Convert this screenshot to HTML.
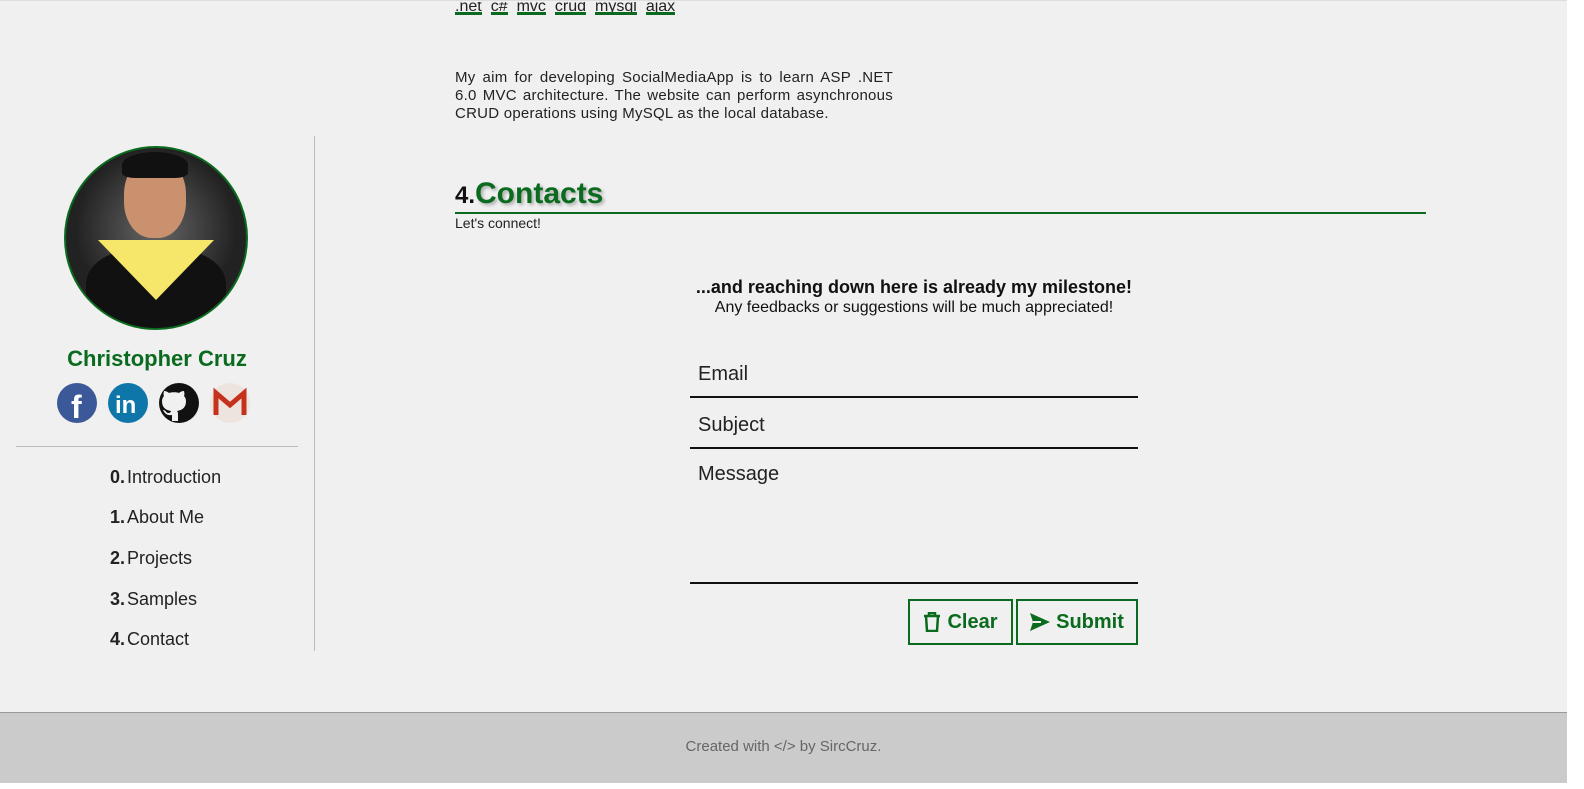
<!DOCTYPE html>
<html><head><style>
body{margin:0;width:1584px;height:789px;background:#fff;font-family:"Liberation Sans",Arial,sans-serif;overflow:hidden;position:relative}
#pg{position:absolute;left:0;top:0;width:1567px;height:781px;background:#f0f0f0;border-top:1px solid #ddd;box-sizing:border-box}
.a{position:absolute}
.tags span{display:inline-block;border-bottom:3px solid #0a6b1e;margin-right:9px;font-size:16px;color:#222;line-height:10px;height:10px;overflow:hidden}
.nav div{position:absolute;left:110px;font-size:18px;color:#222}
.nav b{font-weight:bold;margin-right:2px}
.fld{position:absolute;left:690px;width:448px;border-bottom:2px solid #111;font-size:20px;color:#222;box-sizing:border-box;padding-left:8px}
.btn{position:absolute;top:598px;height:46px;border:2px solid #0a6b1e;box-sizing:border-box;color:#0a6b1e;font-weight:bold;font-size:20px;display:flex;align-items:center;justify-content:center;gap:6px}
</style></head><body>
<div id="pg">
<div class="a tags" style="left:455px;top:1px"><span>.net</span><span>c#</span><span>mvc</span><span>crud</span><span>mysql</span><span>ajax</span></div>
<div class="a" style="left:455px;top:68px;width:438px;font-size:15px;letter-spacing:0.25px;line-height:18px;color:#222;text-align:justify;text-align-last:left">My aim for developing SocialMediaApp is to learn ASP .NET 6.0 MVC architecture. The website can perform asynchronous CRUD operations using MySQL as the local database.</div>
<div class="a" style="left:455px;top:176px;width:971px;height:35px;border-bottom:2px solid #0a6b1e"><span style="font-size:24px;font-weight:bold;color:#111">4.</span><span style="font-size:30px;font-weight:bold;color:#0a6b1e;text-shadow:2px 2px 3px #aaa">Contacts</span></div>
<div class="a" style="left:455px;top:214px;font-size:14px;color:#222">Let's connect!</div>
<div class="a" style="left:314px;top:135px;width:1px;height:515px;background:#bbb"></div>
<div class="a" style="left:64px;top:145px;width:184px;height:184px;border-radius:50%;border:2px solid #0a6b1e;box-sizing:border-box;background:radial-gradient(circle at 50% 45%,#666,#222 60%);overflow:hidden">
 <div class="a" style="left:58px;top:10px;width:62px;height:80px;border-radius:45%;background:#c9916e"></div>
 <div class="a" style="left:56px;top:4px;width:66px;height:26px;border-radius:50% 50% 20% 20%;background:#111"></div>
 <div class="a" style="left:20px;top:100px;width:140px;height:90px;border-radius:40% 40% 0 0;background:#111"></div>
 <div class="a" style="left:32px;top:92px;width:116px;height:60px;background:#f6e76a;clip-path:polygon(0 0,100% 0,50% 100%)"></div>
</div>
<div class="a" style="left:0;top:345px;width:314px;text-align:center;font-size:22px;font-weight:bold;color:#0a6b1e">Christopher Cruz</div>
<svg class="a" style="left:57px;top:382px" width="194" height="40">
<circle cx="20" cy="20" r="20" fill="#3b5998"/><text x="14" y="35" font-family="Liberation Sans" font-weight="bold" font-size="32" fill="#fff">f</text>
<circle cx="71" cy="20" r="20" fill="#0e76a8"/><text x="58" y="30" font-family="Liberation Sans" font-weight="bold" font-size="24" fill="#fff">in</text>
<circle cx="122" cy="20" r="20" fill="#111"/><path d="M115 38v-6c-6 1-8-3-9-5 3 0 3 3 5 3 2 0 3-1 3-2-6-1-9-4-9-10 0-2 1-4 2-5-1-2 0-4 0-5 2 0 4 1 5 2 2-1 8-1 10 0 1-1 3-2 5-2 0 1 1 3 0 5 1 1 2 3 2 5 0 6-3 9-9 10 1 1 1 2 1 4v6z" fill="#f0f0f0"/>
<circle cx="173" cy="20" r="20" fill="#eee4de"/><path d="M159 32V10l14 12 14-12v22" fill="none" stroke="#c6311e" stroke-width="5"/>
</svg>
<div class="a" style="left:16px;top:445px;width:282px;height:1px;background:#bbb"></div>
<div class="nav"><div style="top:466px"><b>0.</b>Introduction</div><div style="top:506px"><b>1.</b>About Me</div><div style="top:547px"><b>2.</b>Projects</div><div style="top:588px"><b>3.</b>Samples</div><div style="top:628px"><b>4.</b>Contact</div></div>
<div class="a" style="left:614px;top:276px;width:600px;text-align:center;font-size:18px;font-weight:bold;color:#111">...and reaching down here is already my milestone!</div>
<div class="a" style="left:614px;top:298px;width:600px;text-align:center;font-size:16px;color:#111">Any feedbacks or suggestions will be much appreciated!</div>
<div class="fld" style="top:362px;height:35px">Email</div>
<div class="fld" style="top:413px;height:35px">Subject</div>
<div class="fld" style="top:462px;height:121px">Message</div>
<div class="btn" style="left:908px;width:105px"><svg width="18" height="20" viewBox="0 0 18 20"><path d="M1 4h16M6 4V1h6v3M3 4l1 15h10l1-15" fill="none" stroke="#0a6b1e" stroke-width="2.5"/></svg>Clear</div>
<div class="btn" style="left:1016px;width:122px"><svg width="20" height="18" viewBox="0 0 20 18"><path d="M0 0l20 9-20 9 3-9z" fill="#0a6b1e"/><path d="M3 9h8" stroke="#f0f0f0" stroke-width="2"/></svg>Submit</div>
<div class="a" style="left:0;top:711px;width:1567px;height:70px;background:#cbcbcb;border-top:1px solid #999;text-align:center;line-height:68px;font-size:15px;color:#666">Created with &lt;/&gt; by SircCruz.</div>
</div>
</body></html>
